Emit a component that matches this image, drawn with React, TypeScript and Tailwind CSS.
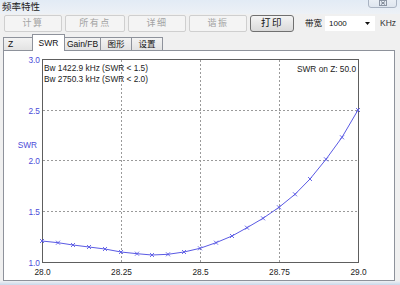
const PTS: [number, number][] = [
  [42, 241], [58, 242.7], [73, 245], [89, 247], [105, 249], [121, 252], [137, 253.7],
  [152, 255], [168, 254.3], [184, 252], [200, 248.3], [216, 242.7], [232, 236],
  [247, 227.7], [263, 218.3], [279, 207.3], [295, 194.3], [310, 179], [326, 159.3],
  [342, 137.3], [358, 110],
];

const Y_LABELS: [string, number][] = [["3.0", 59.5], ["2.5", 110.5], ["2.0", 160.5], ["1.5", 211.5], ["1.0", 262.5]];
const X_LABELS: [string, number][] = [["28.0", 42.5], ["28.25", 121.5], ["28.5", 200.5], ["28.75", 279.5], ["29.0", 358.5]];

function DisabledBtn({ label, w }: { label: string; w: string }) {
  return (
    <div className={`${w} h-[17px] flex items-center justify-center border border-[#cfcfcf] rounded-[2px] bg-[#f4f4f4] text-[#a3a3a3] text-[9px] tracking-[1.5px]`}>
      {label}
    </div>
  );
}

function SwrChart() {
  const line = PTS.map(([x, y]) => `${x},${y}`).join(" ");
  return (
    <svg width="390" height="229" className="block">
      <g transform="translate(-4,-51)" fontFamily="'Liberation Sans', sans-serif" fontSize="8.3">
        {/* grid */}
        {[121.5, 200.5, 279.5].map((x) => (
          <line key={x} x1={x} y1={60} x2={x} y2={262} stroke="#9a9a9a" strokeDasharray="2 2" />
        ))}
        {[110.5, 160.5, 211.5].map((y) => (
          <line key={y} x1={43} y1={y} x2={358} y2={y} stroke="#9a9a9a" strokeDasharray="2 2" />
        ))}
        <rect x={42.5} y={59.5} width={316} height={203} fill="none" stroke="#5e5e5e" />
        {/* curve */}
        <polyline points={line} fill="none" stroke="#5a5ae4" strokeWidth="1" />
        {PTS.map(([x, y]) => (
          <path key={x} d={`M${x - 2} ${y - 2}L${x + 2} ${y + 2}M${x - 2} ${y + 2}L${x + 2} ${y - 2}`} stroke="#5a5ae4" strokeWidth="0.9" />
        ))}
        {/* labels */}
        {Y_LABELS.map(([t, y]) => (
          <text key={t} x={40} y={y + 3} textAnchor="end" fill="#4b4bd8">{t}</text>
        ))}
        <text x={37} y={148} textAnchor="end" fill="#4b4bd8">SWR</text>
        {X_LABELS.map(([t, x]) => (
          <text key={t} x={x} y={275} textAnchor="middle" fill="#222">{t}</text>
        ))}
        <text x={44} y={71} fill="#222">Bw 1422.9 kHz (SWR &lt; 1.5)</text>
        <text x={44} y={82} fill="#222">Bw 2750.3 kHz (SWR &lt; 2.0)</text>
        <text x={356} y={72} textAnchor="end" fill="#222">SWR on Z: 50.0</text>
      </g>
    </svg>
  );
}

export default function App() {
  const tab = "h-[13px] -ml-[1px] flex items-center border border-b-0 border-[#8e929b] bg-gradient-to-b from-[#f3f3f3] to-[#e3e3e3] text-[8.5px] text-[#111]";
  return (
    <div className="w-[400px] h-[285px] overflow-hidden relative flex flex-col bg-[#f0f0f0] font-['Liberation_Sans','Noto_Sans_CJK_SC',sans-serif]">
      {/* title bar */}
      <div className="h-[14px] flex items-center pl-[2px] bg-gradient-to-b from-[#e2ebf5] to-[#edf1f6] text-[9.5px] text-[#222]">
        频率特性
      </div>
      {/* close button */}
      <div className="absolute right-[3px] top-[-4px] w-[29px] h-[12px] rounded-[3px] border border-[#a9b3c2] bg-gradient-to-b from-[#eef2f7] to-[#dfe6ef] flex items-end justify-center pb-[1px]">
        <svg width="8" height="6" viewBox="0 0 8 6">
          <rect x="0.5" y="0.5" width="7" height="5" fill="none" stroke="#8c95a3" />
          <path d="M2 1.5L6 4.5M6 1.5L2 4.5" stroke="#7d8694" />
        </svg>
      </div>
      {/* toolbar */}
      <div className="h-[17px] mt-[1px] flex items-center pl-[4px] gap-[3px]">
        <DisabledBtn label="计算" w="w-[58px]" />
        <DisabledBtn label="所有点" w="w-[60px]" />
        <DisabledBtn label="详细" w="w-[58px]" />
        <DisabledBtn label="谐振" w="w-[58px]" />
        <div className="w-[44px] h-[17px] flex items-center justify-center border border-[#707070] rounded-[3px] bg-gradient-to-b from-[#f4f4f4] to-[#dadada] text-[9.5px] tracking-[1.5px] text-[#111]">
          打印
        </div>
        <span className="ml-[8px] text-[8.5px] text-[#111]">带宽</span>
        <div className="w-[50px] h-[15px] bg-white flex items-center justify-between pl-[4px] pr-[5px] text-[8px] text-[#111]">
          <span>1000</span>
          <svg width="5" height="3" viewBox="0 0 5 3"><path d="M0 0H5L2.5 3Z" fill="#111" /></svg>
        </div>
        <span className="ml-[2px] text-[8.5px] text-[#333]">KHz</span>
      </div>
      {/* tabs */}
      <div className="mt-[2px] h-[16px] flex items-end pl-[4px] relative z-10">
        <div className={`${tab} w-[30px] pl-[4px]`}>Z</div>
        <div className="w-[33px] h-[17px] -ml-[1px] -mb-[1px] flex items-center justify-center border border-b-0 border-[#8e929b] bg-white text-[8.5px] text-[#111]">
          SWR
        </div>
        <div className={`${tab} w-[37px] justify-center`}>Gain/FB</div>
        <div className={`${tab} w-[32px] justify-center`}>图形</div>
        <div className={`${tab} w-[32px] justify-center`}>设置</div>
      </div>
      {/* tab panel */}
      <div className="ml-[3px] w-[392px] h-[231px] border border-[#8e929b] bg-white">
        <SwrChart />
      </div>
      <div className="flex-1 bg-gradient-to-b from-[#eef0f3] to-[#c9d8ea]" />
    </div>
  );
}
